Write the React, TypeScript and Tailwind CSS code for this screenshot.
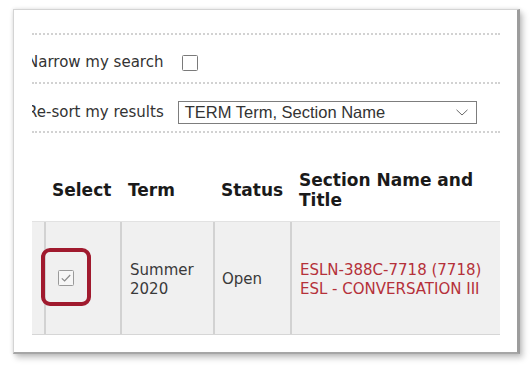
import React from 'react';

const Dotted = () => <div className="h-0 border-t-2 border-dotted border-[#d2d2d2]" />;

const CheckBox: React.FC<{ checked?: boolean; className?: string }> = ({ checked, className }) => (
  <svg width="16" height="16" viewBox="0 0 16 16" className={className}>
    <rect x="0.5" y="0.5" width="15" height="15" rx="1" fill={checked ? '#f6f6f6' : '#ffffff'} stroke={checked ? '#9a9a9a' : '#7a7a7a'} />
    {checked && <path d="M3.8 8.4 L6.6 11 L12.2 5" fill="none" stroke="#8a8a8a" strokeWidth="1.2" />}
  </svg>
);

export default function App() {
  const verdana = { fontFamily: '"DejaVu Sans", Verdana, sans-serif' };
  return (
    <div className="w-[531px] h-[372px] bg-white overflow-hidden pt-[9px] pl-[13px]" style={verdana}>
      <div className="w-[507px] h-[345px] bg-white border-l border-t border-[#d4d4d4] border-r-[3px] border-r-[#9c9c9c] border-b-2 border-b-[#a6a6a6] shadow-[0_0_4px_rgba(0,0,0,0.12),3px_4px_6px_rgba(0,0,0,0.22)] pt-[23px] pl-[18px] pr-[17px]">
        <div className="w-[468px] overflow-hidden">
          <Dotted />
          <div className="h-[47px] flex items-center pt-[8px] text-[15px] text-[#333]">
            <span className="ml-[-5px] whitespace-nowrap">Narrow my search</span>
            <CheckBox className="ml-[19px] shrink-0" />
          </div>
          <Dotted />
          <div className="h-[47px] flex items-center pt-[9px] text-[15px] text-[#333]">
            <span className="ml-[-5px] whitespace-nowrap">Re-sort my results</span>
            <div className="ml-[14px] w-[299px] h-[23px] border border-[#7d7d7d] flex items-center justify-between pl-[6px] pr-[8px] shrink-0">
              <span className="text-[16.5px] text-[#333] leading-none" style={{ fontFamily: '"Liberation Sans", Arial, sans-serif' }}>
                TERM Term, Section Name
              </span>
              <svg width="12" height="7" viewBox="0 0 12 7">
                <path d="M0.5 0.8 L6 6 L11.5 0.8" fill="none" stroke="#6a6a6a" strokeWidth="1" />
              </svg>
            </div>
          </div>
          <Dotted />

          <div className="mt-[25px] h-[63px] flex items-center text-[17px] font-bold text-[#1a1a1a] leading-[20px]">
            <div className="w-[12px]" />
            <div className="w-[76px] pl-[8px]">Select</div>
            <div className="w-[93px] pl-[8px]">Term</div>
            <div className="w-[77px] pl-[8px]">Status</div>
            <div className="w-[210px] pl-[9px]">
              Section Name and
              <br />
              Title
            </div>
          </div>

          <div className="h-[114px] flex bg-[#f0f0f0] border-t border-[#e2e2e2] border-b border-b-[#d6d6d6] text-[15px] text-[#3a3a3a] leading-[19px]">
            <div className="w-[12px]" />
            <div className="w-[76px] border-l-2 border-[#d2d2d2] relative flex items-center pl-[12px]">
              <CheckBox checked />
              <div className="absolute left-[-5px] top-[26px] w-[50px] h-[58px] border-4 border-[#a01a2e] rounded-[9px]" />
            </div>
            <div className="w-[93px] border-l-2 border-[#d2d2d2] flex items-center pl-[8px] pt-[3px]">
              <div>
                Summer
                <br />
                2020
              </div>
            </div>
            <div className="w-[77px] border-l-2 border-[#d2d2d2] flex items-center pl-[7px] pt-[3px]">Open</div>
            <div className="w-[210px] border-l-2 border-[#d2d2d2] flex items-center pl-[8px] pt-[3px] text-[#b5313a]">
              <div className="whitespace-nowrap">
                ESLN-388C-7718 (7718)
                <br />
                ESL - CONVERSATION III
              </div>
            </div>
          </div>
        </div>
      </div>
    </div>
  );
}
